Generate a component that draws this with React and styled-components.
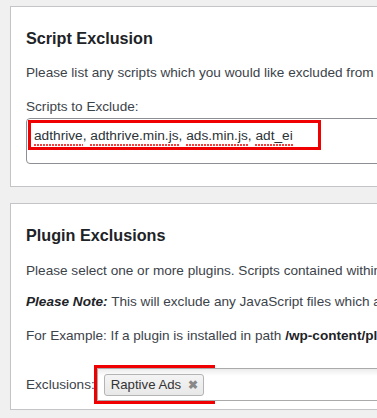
import styled, { createGlobalStyle } from "styled-components"

const GlobalStyle = createGlobalStyle`
    html, body {
        margin: 0;
        padding: 0;
        background: #f0f0f1;
        overflow: hidden;
    }
    body {
        font-family: "Liberation Sans", Arial, sans-serif;
        color: #3c434a;
    }
`

const Page = styled.div`
    padding: 6px 0 0 10px;
    display: flex;
    flex-direction: column;
    gap: 16px;
    width: 700px;
`

const Card = styled.section`
    background: #fff;
    border: 1px solid #c3c4c7;
    padding: 0 15px;
    height: ${props => props.$height}px;
    box-sizing: border-box;
    display: flex;
    flex-direction: column;
    overflow: hidden;
`

const Title = styled.h2`
    margin: 20px 0 0;
    font-size: 16.2px;
    font-weight: 700;
    color: #1d2327;
    line-height: 22px;
`

const Text = styled.p`
    margin: ${props => props.$top}px 0 0;
    font-size: 13.6px;
    line-height: 20px;
    white-space: nowrap;
    & b {
        color: #1d2327;
    }
`

const Label = styled.div`
    margin-top: 14px;
    font-size: 13.6px;
    line-height: 20px;
`

const TextBox = styled.div`
    margin-top: 1px;
    height: 46px;
    box-sizing: border-box;
    border: 1px solid #8c8f94;
    border-radius: 4px;
    padding: 1px;
`

const Highlight = styled.div`
    display: flex;
    align-items: center;
    width: 293px;
    height: 30px;
    box-sizing: border-box;
    border: 3px solid #f00000;
    padding: 0 0 0 3px;
`

const Entry = styled.span`
    font-size: 13.7px;
    color: #2c3338;
    white-space: nowrap;
`

const Spell = styled.span`
    padding-bottom: 3px;
    background-image: linear-gradient(90deg, #f04040 60%, transparent 60%);
    background-size: 3px 2px;
    background-repeat: repeat-x;
    background-position: 0 100%;
`

const Row = styled.div`
    margin-top: 19px;
    display: flex;
    align-items: center;
    font-size: 13.6px;
`

const SelectWrap = styled.div`
    position: relative;
    width: 500px;
    margin-left: -1px;
`

const Marked = styled.div`
    border: 3px solid #f00000;
    width: 121px;
    height: 39px;
    box-sizing: border-box;
    position: relative;
`

const Select = styled.div`
    position: absolute;
    left: 0;
    top: 0;
    width: 400px;
    height: 33px;
    box-sizing: border-box;
    border: 1px solid #aaa;
    border-right: none;
    background: linear-gradient(#ececec, #fff 7px);
    display: flex;
    align-items: center;
    padding-left: 6px;
`

const Tag = styled.span`
    display: inline-flex;
    align-items: center;
    gap: 7px;
    height: 20px;
    padding: 0 5px 0 6px;
    border: 1px solid #b4b4b4;
    border-radius: 3px;
    background: linear-gradient(#f4f4f4, #e8e8e8);
    color: #333;
    font-size: 13.2px;
`

const Remove = styled.span`
    color: #888;
    font-weight: 700;
    font-size: 12px;
`

export default function App() {
    const words = ["adthrive", "adthrive.min.js", "ads.min.js", "adt_ei"]
    return (
        <Page>
            <GlobalStyle />
            <Card $height={181}>
                <Title>Script Exclusion</Title>
                <Text $top={14}>Please list any scripts which you would like excluded from being deferred</Text>
                <Label>Scripts to Exclude:</Label>
                <TextBox>
                    <Highlight>
                        <Entry>
                            {words.map((w, i) => (
                                <span key={w}>
                                    <Spell>{w}</Spell>{i < words.length - 1 ? ", " : ""}
                                </span>
                            ))}
                        </Entry>
                    </Highlight>
                </TextBox>
            </Card>
            <Card $height={207}>
                <Title>Plugin Exclusions</Title>
                <Text $top={15}>Please select one or more plugins. Scripts contained within the plugin will not be deferred.</Text>
                <Text $top={11}><b><i>Please Note:</i></b> This will exclude any JavaScript files which are loaded by the plugin.</Text>
                <Text $top={14}>For Example: If a plugin is installed in path <b>/wp-content/plugins/some-plugin/</b></Text>
                <Row>
                    <span>Exclusions:</span>
                    <SelectWrap>
                        <Marked>
                            <Select>
                                <Tag>Raptive Ads<Remove>✖</Remove></Tag>
                            </Select>
                        </Marked>
                    </SelectWrap>
                </Row>
            </Card>
        </Page>
    )
}
